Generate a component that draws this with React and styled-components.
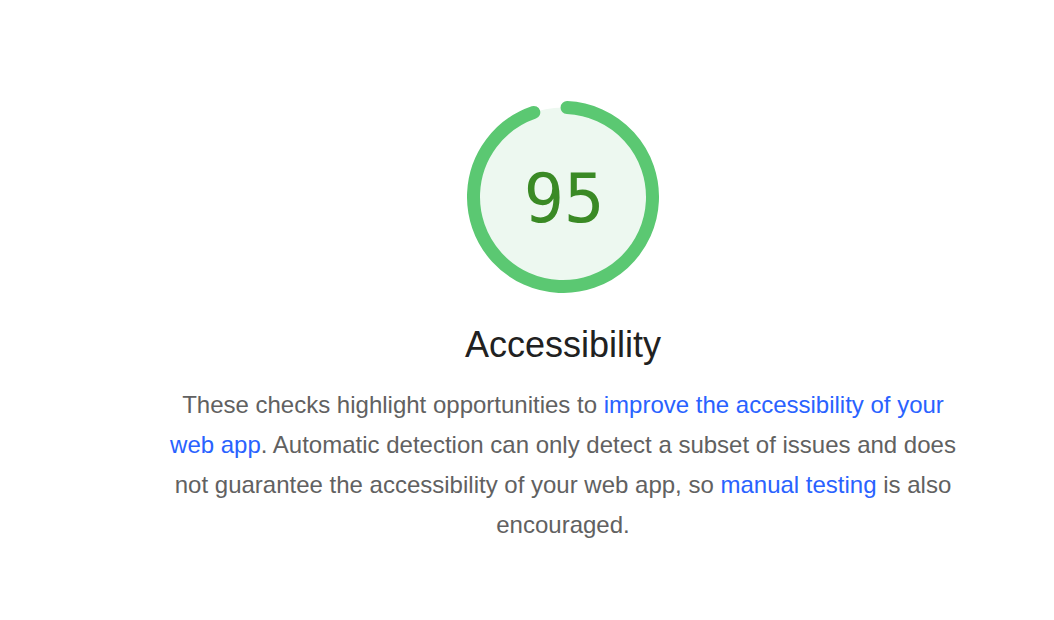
import styled, { createGlobalStyle } from 'styled-components';

// GLOBAL
const GlobalStyle = createGlobalStyle`
  body {
    margin: 0;
    background: #fff;
    font-family: "Liberation Sans", Arial, sans-serif;
  }
`;

// STYLES
const Page = styled.main`
  width: 1054px;
  height: 620px;
  box-sizing: border-box;
  padding: 101px 0 0 72px;
  display: flex;
  flex-direction: column;
  align-items: center;
`;

const Gauge = styled.div`
  position: relative;
  width: 192px;
  height: 192px;
`;

const GaugeSvg = styled.svg`
  display: block;
  width: 192px;
  height: 192px;
`;

const Score = styled.div`
  position: absolute;
  inset: 0;
  display: flex;
  align-items: center;
  justify-content: center;
  padding: 4px 0 0 2px;
  font-family: "DejaVu Sans Mono", Menlo, monospace;
  font-size: 67px;
  color: #3a8a25;
`;

const Title = styled.h2`
  margin: 30px 0 0;
  font-size: 36px;
  font-weight: 400;
  line-height: 44px;
  color: #212121;
`;

const Description = styled.p`
  max-width: 796px;
  margin: 18px 0 0;
  font-size: 24px;
  line-height: 40px;
  color: #616161;
  text-align: center;
`;

const DocLink = styled.a`
  color: #2962ff;
  text-decoration: none;
`;

// GAUGE
function ScoreGauge({ score }) {
  const r = 89.5;
  const c = 2 * Math.PI * r;
  const arc = (337.8 / 360) * c;
  return (
    <Gauge>
      <GaugeSvg viewBox="0 0 192 192">
        <circle cx="96" cy="96" r={r} fill="#edf8f0" />
        <circle
          cx="96"
          cy="96"
          r={r}
          fill="none"
          stroke="#5bc872"
          strokeWidth="13"
          strokeLinecap="round"
          strokeDasharray={`${arc} ${c}`}
          transform="rotate(-87.4 96 96)"
        />
      </GaugeSvg>
      <Score>{score}</Score>
    </Gauge>
  );
}

// APP
function App() {
  return (
    <>
      <GlobalStyle />
      <Page>
        <ScoreGauge score={95} />
        <Title>Accessibility</Title>
        <Description>
          These checks highlight opportunities to{' '}
          <DocLink href="#">improve the accessibility of your web app</DocLink>.
          Automatic detection can only detect a subset of issues and does not
          guarantee the accessibility of your web app, so{' '}
          <DocLink href="#">manual testing</DocLink> is also encouraged.
        </Description>
      </Page>
    </>
  );
}

export default App;
